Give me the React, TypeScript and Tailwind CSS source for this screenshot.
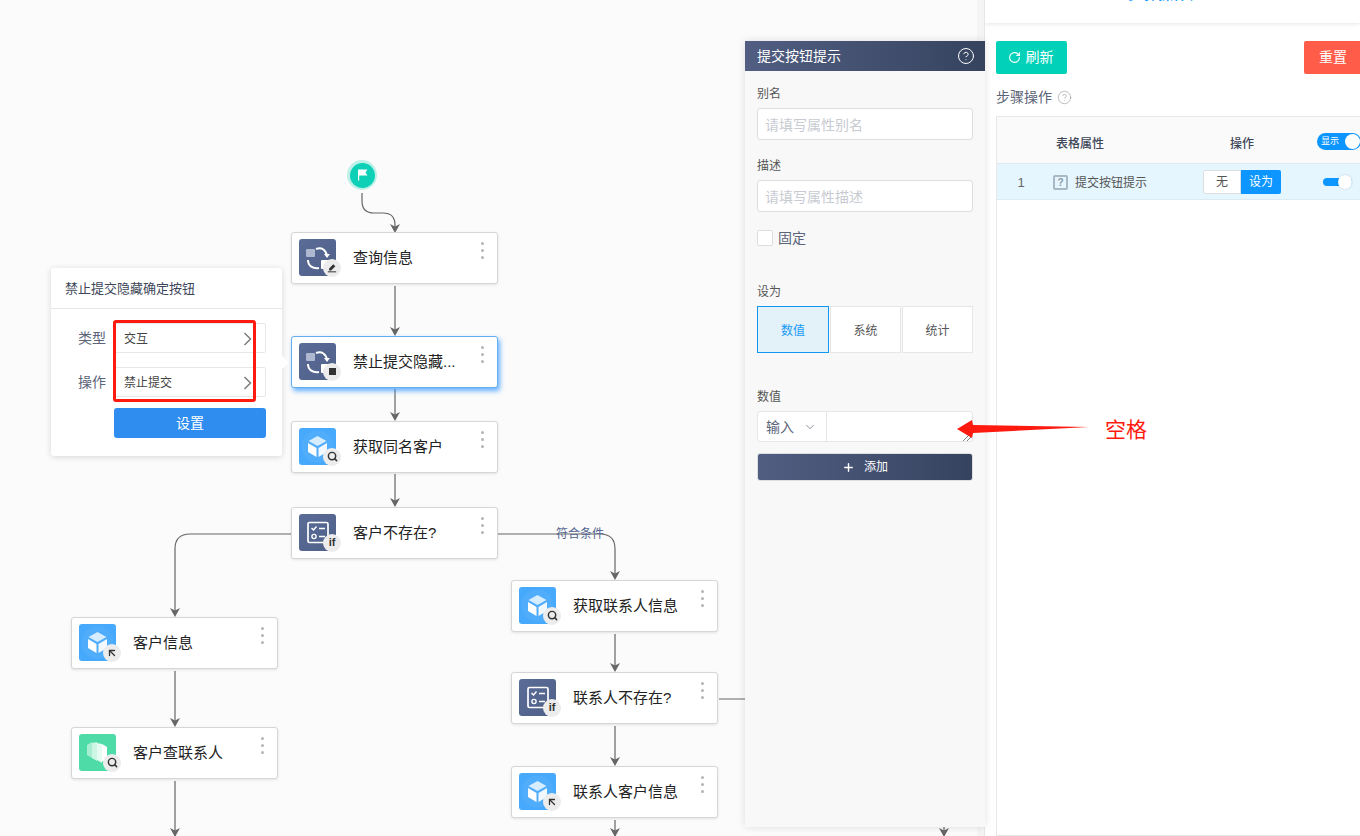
import React from "react";
import { ArrowUpLeft, ChevronDown, CircleHelp, Plus, RotateCw, Search } from "lucide-react";

type IconKind = "sync" | "cube" | "form" | "stack";
type BadgeKind = "pen" | "stop" | "search" | "if" | "cursor";

const nodes: { x: number; y: number; title: string; icon: IconKind; badge: BadgeKind; active?: boolean }[] = [
  { x: 291, y: 232, title: "查询信息", icon: "sync", badge: "pen" },
  { x: 291, y: 336, title: "禁止提交隐藏...", icon: "sync", badge: "stop", active: true },
  { x: 291, y: 421, title: "获取同名客户", icon: "cube", badge: "search" },
  { x: 291, y: 507, title: "客户不存在?", icon: "form", badge: "if" },
  { x: 71, y: 617, title: "客户信息", icon: "cube", badge: "cursor" },
  { x: 71, y: 727, title: "客户查联系人", icon: "stack", badge: "search" },
  { x: 511, y: 580, title: "获取联系人信息", icon: "cube", badge: "search" },
  { x: 511, y: 672, title: "联系人不存在?", icon: "form", badge: "if" },
  { x: 511, y: 766, title: "联系人客户信息", icon: "cube", badge: "cursor" },
];

const lines = [
  "M362 193 V201 Q362 213 374 213 H383 Q395 213 395 225 V230",
  "M395 286 V334",
  "M395 389 V419",
  "M395 474 V505",
  "M291 534 H190 Q175 534 175 549 V615",
  "M498 534 H600 Q615 534 615 549 V578",
  "M175 671 V725",
  "M175 781 V836",
  "M615 634 V670",
  "M615 726 V764",
  "M615 820 V836",
  "M719 699 H944 V836",
];

const arrows = [
  [395, 233],
  [395, 336],
  [395, 421],
  [395, 507],
  [175, 617],
  [175, 727],
  [175, 837],
  [615, 580],
  [615, 672],
  [615, 766],
  [615, 837],
  [944, 837],
];

const iconBg: Record<IconKind, string> = {
  sync: "bg-linear-to-br from-[#5a6d97] to-[#4f5f88]",
  form: "bg-linear-to-br from-[#5a6d97] to-[#4f5f88]",
  cube: "bg-[#47a9fb]",
  stack: "bg-[#4fdba7]",
};

const NodeIcon = ({ kind }: { kind: IconKind }) => {
  if (kind === "sync") {
    return (
      <svg viewBox="0 0 37 37" className="size-full">
        <rect x="7" y="10" width="9" height="8" rx="1" fill="#aeb8d0" />
        <path d="M17 10 C23 8 27 11 28 17" fill="none" stroke="#fff" strokeWidth="2" />
        <path d="M25 15 L28 19 L31 15" fill="#fff" />
        <path d="M9 21 C9 27 14 30 20 29" fill="none" stroke="#fff" strokeWidth="2" />
        <rect x="22" y="21" width="9" height="9" rx="1" fill="#fff" />
      </svg>
    );
  }
  if (kind === "cube") {
    return (
      <svg viewBox="0 0 37 37" className="size-full">
        <circle cx="18.5" cy="18.5" r="16" fill="#fff" opacity="0.05" />
        <path d="M18.5 8 L27.5 13 L18.5 18 L9.5 13 Z" fill="#d6ecff" />
        <path d="M9 15 L17.5 20 V29 L9 24 Z" fill="#fff" />
        <path d="M28 15 L19.5 20 V29 L28 24 Z" fill="#f1f8ff" />
      </svg>
    );
  }
  if (kind === "form") {
    return (
      <svg viewBox="0 0 37 37" className="size-full" fill="none" stroke="#fff">
        <rect x="9" y="8.5" width="20" height="20" rx="1.5" strokeWidth="1.7" />
        <path d="M12.5 14 L14.5 16 L17.5 12.5" strokeWidth="1.5" />
        <path d="M20 14.5 H26 M20 22.5 H26" strokeWidth="1.7" />
        <circle cx="15" cy="22.5" r="2.1" strokeWidth="1.4" />
      </svg>
    );
  }
  return (
    <svg viewBox="0 0 37 37" className="size-full">
      <path d="M8 11 L13 8 V24 L8 21 Z" fill="#a9eed3" />
      <path d="M13 9 L18 8 V27 L13 24 Z" fill="#cdf6e6" />
      <path d="M18 9 L23 10 V29 L18 26 Z" fill="#e6fbf2" />
      <path d="M23 10 L28 13 V29 L23 27 Z" fill="#fff" />
    </svg>
  );
};

const NodeBadge = ({ kind }: { kind: BadgeKind }) => (
  <span className="absolute left-[24px] top-[20px] flex size-[18px] items-center justify-center rounded-full bg-[#ececec] text-[#333]">
    {kind === "pen" && (
      <svg viewBox="0 0 12 12" className="size-[10px]" fill="#333">
        <path d="M7.5 1.5 L10 4 L5 9 H2.5 V6.5 Z" />
        <rect x="1" y="10" width="10" height="1.2" />
      </svg>
    )}
    {kind === "stop" && <span className="size-[7px] bg-[#333]" />}
    {kind === "search" && <Search size={11} strokeWidth={3.2} />}
    {kind === "cursor" && <ArrowUpLeft size={12} strokeWidth={2.6} />}
    {kind === "if" && <span className="text-[11px] font-semibold leading-none">if</span>}
  </span>
);

const FlowNode = ({ x, y, title, icon, badge, active }: (typeof nodes)[number]) => (
  <div
    className={
      "absolute flex h-[52px] w-[207px] items-center rounded-[3px] border bg-white " +
      (active
        ? "border-[#62aeee] shadow-[2px_3px_5px_rgba(64,158,255,0.8)]"
        : "border-[#d6d6d6] shadow-[0_1px_3px_rgba(0,0,0,0.1)]")
    }
    style={{ left: x, top: y }}
  >
    <div className="relative ml-[7px] size-[37px] -translate-y-px">
      <div className={"size-full rounded-[3px] " + iconBg[icon]}>
        <NodeIcon kind={icon} />
      </div>
      <NodeBadge kind={badge} />
    </div>
    <span className="ml-[17px] whitespace-nowrap text-[15px] text-[#222]">{title}</span>
    <div className="absolute left-[189px] top-[9px] flex flex-col gap-[4px]">
      <span className="size-[3px] rounded-full bg-[#b5b5b5]" />
      <span className="size-[3px] rounded-full bg-[#b5b5b5]" />
      <span className="size-[3px] rounded-full bg-[#b5b5b5]" />
    </div>
  </div>
);

const Chevron = () => (
  <svg width="9" height="14" viewBox="0 0 9 14" fill="none" stroke="#777" strokeWidth="1.4">
    <path d="M1.5 1 L7.5 7 L1.5 13" />
  </svg>
);

const SettingsPopup = () => (
  <div className="absolute left-[51px] top-[268px] h-[188px] w-[231px] rounded-[3px] bg-white shadow-[0_1px_6px_rgba(0,0,0,0.15)]">
    <div className="flex h-[41px] items-center border-b border-[#e6e6e6] pl-[14px] pt-[2px] text-[13px] text-[#3c4658]">
      禁止提交隐藏确定按钮
    </div>
    <div className="flex flex-col pl-[63px] pt-[14px]">
      <div className="flex h-[30px] w-[152px] items-center justify-between rounded-[2px] border border-[#e8e8e8] pl-[9px] pr-[13px] pt-[2px] text-[12px] text-[#444]">
        交互
        <Chevron />
      </div>
      <div className="mt-[14px] flex h-[30px] w-[152px] items-center justify-between rounded-[2px] border border-[#e8e8e8] pl-[9px] pr-[13px] pt-[2px] text-[12px] text-[#444]">
        禁止提交
        <Chevron />
      </div>
      <button className="mt-[11px] h-[30px] w-[152px] rounded-[3px] bg-[#2f8df0] text-[14px] text-white">设置</button>
    </div>
    <span className="absolute left-[27px] top-[60px] text-[14px] leading-5 text-[#5b6478]">类型</span>
    <span className="absolute left-[27px] top-[104px] text-[14px] leading-5 text-[#5b6478]">操作</span>
    <span className="absolute left-[62px] top-[52px] h-[82px] w-[143px] rounded-[3px] border-[3px] border-[#ff1a10]" />
    <span className="absolute left-[227px] top-[90px] size-[9px] rotate-45 bg-white" />
  </div>
);

const Field = ({ placeholder }: { placeholder: string }) => (
  <div className="mt-[4px] flex h-[32px] items-center rounded-[3px] border border-[#dcdee2] bg-white pl-[7px] pt-[2px] text-[14px] text-[#c8cbd2]">
    {placeholder}
  </div>
);

const PropertyPanel = () => (
  <aside className="absolute left-[745px] top-[41px] h-[786px] w-[240px] bg-[#f8f8f8] shadow-[0_0_8px_rgba(0,0,0,0.12)]">
    <div className="flex h-[30px] items-center justify-between bg-linear-to-r from-[#515e82] to-[#36435f] pl-[12px] pr-[10px] text-[14px] text-white">
      提交按钮提示
      <CircleHelp size={18} strokeWidth={1.3} />
    </div>
    <div className="px-[12px] pt-[13px] text-[12px] leading-5 text-[#555]">
      <div>别名</div>
      <Field placeholder="请填写属性别名" />
      <div className="mt-[16px]">描述</div>
      <Field placeholder="请填写属性描述" />
      <div className="mt-[18px] flex h-[16px] items-center gap-[5px] text-[14px] text-[#5b6478]">
        <span className="size-[16px] rounded-[2px] border border-[#dcdee2] bg-white" />
        固定
      </div>
      <div className="mt-[36px]">设为</div>
      <div className="mt-[4px] flex h-[47px] gap-px">
        <div className="flex w-[72px] items-center justify-center border border-[#1296f0] bg-[#e3f1f9] pt-[2px] text-[#1a9bf5]">数值</div>
        <div className="flex flex-1 items-center justify-center border border-[#e6e6e6] bg-white pt-[2px]">系统</div>
        <div className="flex flex-1 items-center justify-center border border-[#e6e6e6] bg-white pt-[2px]">统计</div>
      </div>
      <div className="mt-[34px]">数值</div>
      <div className="relative mt-[4px] flex h-[31px] rounded-[3px] border border-[#e6e6e6] bg-white">
        <div className="flex w-[69px] items-center justify-between border-r border-[#e6e6e6] pl-[8px] pr-[9px] text-[14px] text-[#5b6478]">
          输入
          <ChevronDown size={14} strokeWidth={1.5} className="text-[#7d8394]" />
        </div>
        <svg width="9" height="8" viewBox="0 0 9 8" className="absolute bottom-0 right-[1px]" stroke="#666" strokeWidth="0.8">
          <path d="M1 8 L8 1 M5 8 L9 4" />
        </svg>
      </div>
      <button className="mt-[11px] flex h-[28px] w-full items-center justify-center gap-[9px] rounded-[3px] border border-[#dcdee2] bg-linear-to-r from-[#515e82] to-[#36435f] text-[12px] text-white">
        <Plus size={13} strokeWidth={2.6} />
        添加
      </button>
    </div>
  </aside>
);

const StepsPanel = () => (
  <aside className="flex h-full w-[376px] shrink-0 flex-col overflow-hidden border-l border-[#e6e6e6] bg-white">
    <div className="relative z-10 h-[23px] shadow-[0_1px_4px_rgba(0,0,0,0.1)]">
      <div className="absolute left-[143px] top-[-16px] whitespace-nowrap text-[15px] font-medium leading-5 text-[#0d96ff]">步骤操作栏</div>
    </div>
    <div className="w-[377px] shrink-0 pl-[11px] pt-[18px]">
      <div className="flex justify-between">
        <button className="flex h-[33px] w-[71px] items-center justify-center gap-[5px] rounded-[2px] bg-[#00d1b8] pr-[2px] text-[14px] text-white">
          <RotateCw size={13} strokeWidth={2} />
          刷新
        </button>
        <button className="h-[33px] w-[58px] rounded-[2px] bg-[#ff5c4a] text-[14px] text-white">重置</button>
      </div>
      <div className="mt-[13px] flex h-[20px] items-center gap-[5px] text-[14px] text-[#5b6478]">
        步骤操作
        <CircleHelp size={15} strokeWidth={1} className="text-[#999]" />
      </div>
      <div className="mt-[9px] h-[720px] border border-[#e8e8e8] text-[12px] text-[#3c4658]">
        <div className="grid h-[46px] grid-cols-[48px_138px_120px_1fr] items-center bg-[#fafafa] pt-[3px] font-medium">
          <span />
          <span className="pl-[11px] pt-[5px]">表格属性</span>
          <span className="pr-[2px] pt-[5px] text-center">操作</span>
          <span className="relative ml-[14px] flex h-[17px] items-center rounded-full bg-[#0d96ff] pl-[4px] text-[9px] font-normal text-white">
            显示
            <span className="absolute right-[1px] size-[15px] rounded-full bg-white" />
          </span>
        </div>
        <div className="grid h-[37px] grid-cols-[48px_138px_120px_1fr] items-center border-y border-[#dcebf3] bg-[#e5f6ff]">
          <span className="pt-[2px] text-center text-[13px] text-[#666]">1</span>
          <span className="flex items-center gap-[7px] pl-[8px] pt-[2px] text-[#555]">
            <span className="flex size-[15px] items-center justify-center rounded-[2px] border-2 border-[#a9b8c4] text-[10px] font-semibold leading-none text-[#8a99a6]">?</span>
            提交按钮提示
          </span>
          <span className="flex h-[24px] justify-center pr-[2px]">
            <span className="flex w-[38px] items-center justify-center rounded-l-[2px] border border-[#dcdee2] bg-white text-[#555]">无</span>
            <span className="flex w-[40px] items-center justify-center rounded-r-[2px] bg-[#0d96ff] text-white">设为</span>
          </span>
          <span className="relative ml-[20px] h-[8px] w-[29px] rounded-full bg-[#0d96ff]">
            <span className="absolute right-0 top-[-3px] size-[14px] rounded-full bg-white shadow-[0_0_2px_rgba(0,0,0,0.2)]" />
          </span>
        </div>
      </div>
    </div>
  </aside>
);

const App = () => {
  return (
    <div className="relative flex h-[836px] w-[1360px] overflow-hidden bg-white font-['Liberation_Sans','Noto_Sans_CJK_SC',sans-serif]">
      <main className="relative h-full w-[977px] shrink-0 overflow-hidden bg-[#fbfbfb]">
        <div className="h-[13px] border-b border-[#fdfdfd]" />
        <svg className="absolute left-[-0.5px] top-0" width="977" height="836" fill="none">
          {lines.map((d) => (
            <path key={d} d={d} stroke="#666" strokeWidth="1.2" />
          ))}
          {arrows.map(([x, y]) => (
            <polygon key={x + "-" + y} points={`${x},${y} ${x - 5},${y - 9} ${x},${y - 6.5} ${x + 5},${y - 9}`} fill="#666" />
          ))}
        </svg>
        <span className="absolute left-[556px] top-[526px] text-[12px] leading-4 text-[#52648f]">符合条件</span>
        <div className="absolute left-[347px] top-[160px] flex size-[30px] items-center justify-center rounded-full bg-[#bdf0e7]">
          <div className="flex size-[25px] items-center justify-center rounded-full bg-[#0dd0b6]">
            <svg width="11" height="12" viewBox="0 0 11 12" fill="#fff">
              <path d="M1 0.5 H10.5 L8.5 3.5 L10.5 6.5 H2.2 V11.5 H1 Z" />
            </svg>
          </div>
        </div>
        {nodes.map((node) => (
          <FlowNode key={node.title} {...node} />
        ))}
        <SettingsPopup />
      </main>
      <div className="h-full w-[7px] shrink-0 bg-[#f4f4f4]" />
      <StepsPanel />
      <PropertyPanel />
      <svg className="absolute left-[950px] top-[415px]" width="145" height="30">
        <polygon points="7,14 22,5 23,10 139,12 23,18 22,23" fill="#ff1a10" />
      </svg>
      <span className="absolute left-[1105px] top-[415px] text-[21px] leading-[30px] text-[#ff1a10]">空格</span>
    </div>
  );
};

export default App;
